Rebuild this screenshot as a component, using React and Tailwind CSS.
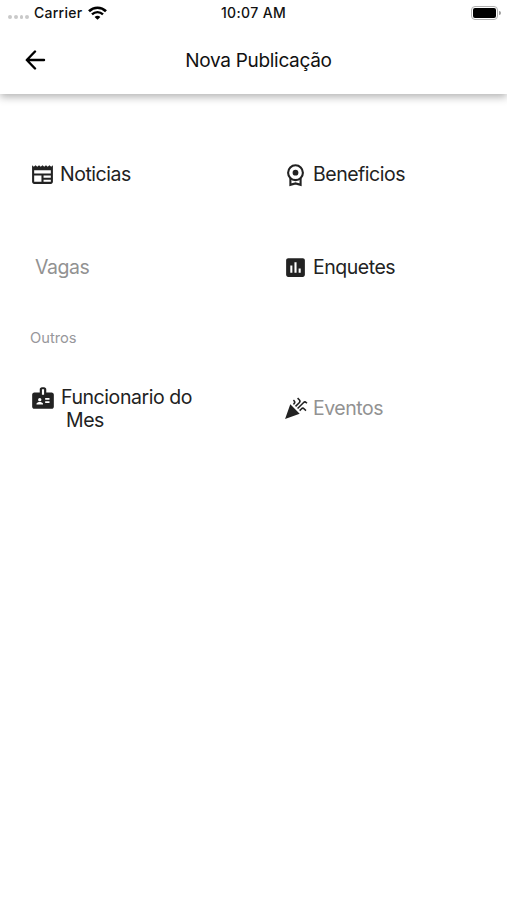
import React from 'react';
import { MdNewspaper, MdInsertChart, MdBadge, MdCelebration } from 'react-icons/md';

function WifiIcon() {
  return (
    <svg className="w-[19px] h-[14px]" viewBox="0 0 19 14" fill="none" stroke="#000">
      <path d="M1 5.2C5.8 0.6 13.2 0.6 18 5.2" strokeWidth="2.7" />
      <path d="M4 8.4C7.2 5.4 11.8 5.4 15 8.4" strokeWidth="2.4" />
      <path d="M9.5 13.8L6.6 10.9C8.3 9.4 10.7 9.4 12.4 10.9Z" fill="#000" stroke="none" />
    </svg>
  );
}

function MedalIcon() {
  return (
    <svg className="w-[25px] h-[24px]" viewBox="0 0 25 24" fill="none" stroke="#222" strokeWidth="2.1">
      <circle cx="12.5" cy="9.7" r="7.4" />
      <circle cx="12.5" cy="9.7" r="2.9" fill="#222" stroke="none" />
      <path d="M7.4 15.2v6.6l5.1-1.4 5.1 1.4v-6.6" />
    </svg>
  );
}

function StatusBar() {
  return (
    <div className="grid grid-cols-3 items-center h-[26px] text-[14px] leading-[18px] font-medium text-[#111]">
      <div className="flex items-center pl-[8px]">
        <div className="flex gap-[2px] mt-[8px] mr-[5px]">
          {[0, 1, 2, 3].map((i) => (
            <span key={i} className="w-[3.75px] h-[3.75px] rounded-full bg-[#c9c9c9]" />
          ))}
        </div>
        <span className="mr-[6px] mb-[1px] tracking-[0.25px]">Carrier</span>
        <WifiIcon />
      </div>
      <span className="text-center mb-[1px] tracking-[0.35px]">10:07 AM</span>
      <div className="flex items-center justify-end pr-[6px]">
        <div className="w-[27px] h-[14px] p-[1px] rounded-[4px] border-[1.5px] border-[#b0b0b0]">
          <div className="w-full h-full rounded-[2px] bg-black" />
        </div>
        <div className="w-[2px] h-[4px] ml-[1px] rounded-r-full bg-[#9c9c9c]" />
      </div>
    </div>
  );
}

function Header() {
  return (
    <header className="h-[94px] bg-white shadow-[0_3px_8px_rgba(0,0,0,0.3)]">
      <StatusBar />
      <div className="grid grid-cols-[64px_1fr_54px] items-center h-[68px]">
        <button className="pl-[25px]">
          <svg className="w-[21px] h-[20px]" viewBox="0 0 21 20" fill="none" stroke="#000" strokeWidth="2.4" strokeLinecap="round" strokeLinejoin="round">
            <path d="M10 1.5L1.8 10L10 18.5M2 10H19" />
          </svg>
        </button>
        <h1 className="pt-[2px] text-center text-[19px] tracking-[-0.31px] text-[#111]">Nova Publicação</h1>
      </div>
    </header>
  );
}

function MenuItem({ icon, label, className }) {
  return (
    <button className={`flex items-center text-left text-[19.5px] leading-[23px] tracking-[-0.48px] whitespace-nowrap ${className}`}>
      {icon}
      <span>{label}</span>
    </button>
  );
}

export default function App() {
  return (
    <div className="w-full h-[900px] bg-white overflow-hidden font-['Inter',sans-serif]">
      <Header />
      <main className="pt-[68px] text-[#222]">
        <div className="grid grid-cols-[253px_1fr] pl-[30px]">
          <MenuItem className="gap-[5px]" icon={<MdNewspaper className="w-[25px] h-[25px]" />} label="Noticias" />
          <MenuItem className="gap-[5px]" icon={<MedalIcon />} label="Beneficios" />
        </div>
        <div className="grid grid-cols-[253px_1fr] pl-[30px] mt-[68px]">
          <MenuItem className="pl-[5px] text-[#929292]" label="Vagas" />
          <MenuItem className="gap-[5px]" icon={<MdInsertChart className="w-[25px] h-[25px]" />} label="Enquetes" />
        </div>
        <p className="mt-[47px] pl-[30px] text-[14.7px] leading-[22px] text-[#97979b]">Outros</p>
        <div className="grid grid-cols-[253px_1fr] items-center pl-[30px] mt-[37px]">
          <button className="flex items-start gap-[5px] text-left text-[19.5px] leading-[23px] tracking-[-0.43px]">
            <MdBadge className="w-[26px] h-[26px] -mt-[1px]" />
            <span>
              Funcionario do
              <br />
              <span className="pl-[5px]">Mes</span>
            </span>
          </button>
          <MenuItem
            className="gap-[5px] pb-[2px] text-[#929292]"
            icon={<MdCelebration className="w-[25px] h-[25px] text-[#222]" />}
            label="Eventos"
          />
        </div>
      </main>
    </div>
  );
}
